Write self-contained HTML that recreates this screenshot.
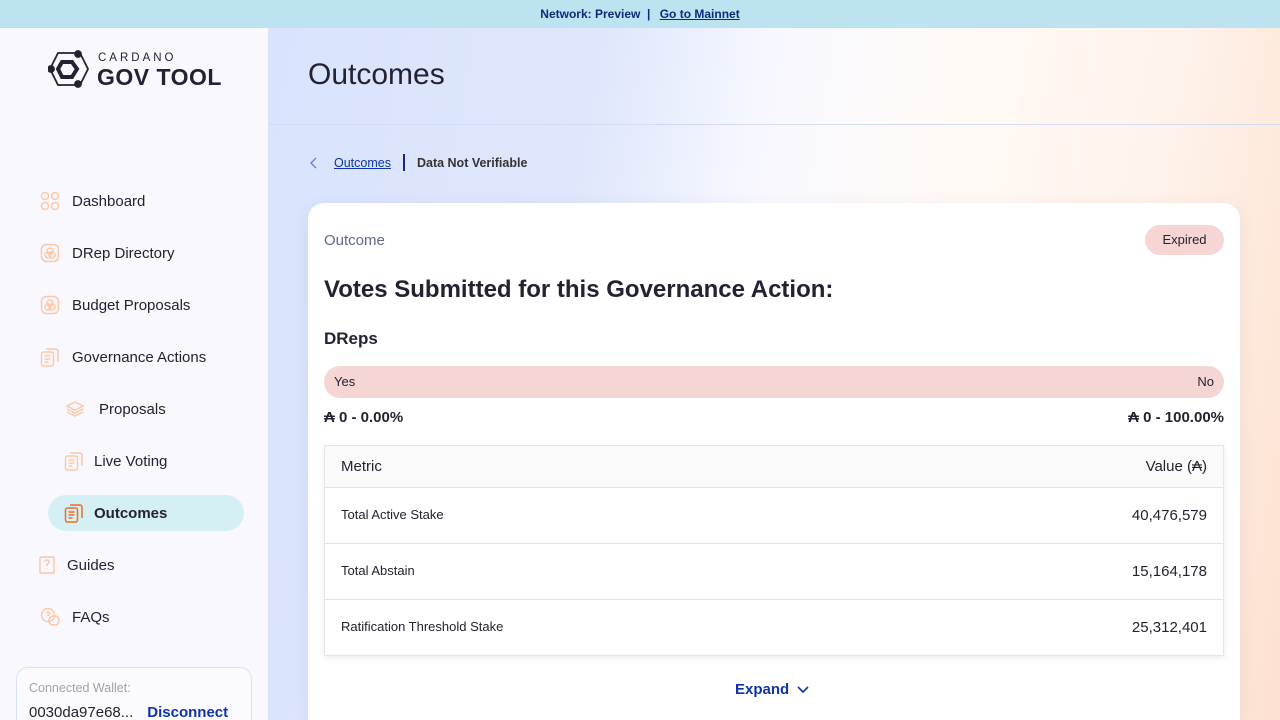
<!DOCTYPE html>
<html style="overflow:hidden;width:1280px;height:720px"><head><meta charset="utf-8"><style>
*{box-sizing:border-box;margin:0;padding:0}
body{width:1280px;height:720px;overflow:hidden;font-family:"Liberation Sans",sans-serif;color:#242232;position:relative;background:#fff}
.banner{position:absolute;top:0;left:0;width:1280px;height:28px;background:#bde3f0;text-align:center;font-size:12px;font-weight:bold;color:#0f2a7a;line-height:28px}
.banner a{color:#0f2a7a;text-decoration:underline;margin-left:6px}
.side{position:absolute;top:28px;left:0;width:268px;height:692px;background:#f9f8fe;overflow:hidden}
.main{position:absolute;top:28px;left:268px;width:1012px;height:692px;overflow:hidden;background:linear-gradient(100deg,#d9e3fd 0%,#dfe7fc 30%,#f7f8ff 45%,#fffaf7 60%,#fff3ec 80%,#fde1d0 100%)}
.logo{position:absolute;left:48px;top:22px}
.nav{position:absolute;left:40px;font-size:15px;display:flex;align-items:center;gap:12px;color:#242232}
.nav svg{width:20px;height:20px;fill:none;stroke:#fdc8a6;stroke-width:1.5}
.active{position:absolute;left:48px;top:467px;width:196px;height:36px;border-radius:18px;background:#d5f0f4}
.wallet{position:absolute;left:16px;top:639px;width:236px;height:53px;border:1px solid #d8e0f8;border-bottom:none;border-radius:12px 12px 0 0;background:#fbfbff;padding:13px 12px 0}
h1{position:absolute;left:40px;top:30px;font-size:30px;font-weight:normal;color:#242232}
.hr{position:absolute;left:0;top:96px;width:1012px;height:1px;background:#d3dcf5}
.crumb{position:absolute;left:40px;top:126px;font-size:12.5px;display:flex;align-items:center}
.card{position:absolute;left:40px;top:175px;width:932px;height:517px;background:#fff;border-radius:16px 16px 0 0;box-shadow:0 4px 20px rgba(0,0,0,.06)}
.tbl{position:absolute;left:16px;top:242px;width:900px;border:1px solid #e6e6e6;box-shadow:0 2px 6px rgba(0,0,0,.08)}
.row{height:56px;border-top:1px solid #e3e3e3;display:flex;justify-content:space-between;padding:0 16px;font-size:13px}
</style></head><body>
<div class="banner">Network: Preview &nbsp;| <a>Go to Mainnet</a></div>
<div class="side">
 <div class="logo">
  <svg width="42" height="38" viewBox="0 0 42 38" style="position:absolute;left:0;top:0" fill="none" stroke="#242232" stroke-width="1.8"><polygon points="10,3 32,3 40,19 32,35 10,35 2,19"/><polygon points="14,12 24,12 29,19 24,27 14,27 10,19" stroke-width="4"/><circle cx="30" cy="4" r="3" fill="#242232"/><circle cx="3" cy="19" r="3" fill="#242232"/><circle cx="30" cy="34" r="3" fill="#242232"/></svg>
  <div style="position:absolute;left:50px;top:2px;font-size:11.5px;letter-spacing:3px;white-space:nowrap">CARDANO</div>
  <div style="position:absolute;left:49px;top:14px;font-size:23px;font-weight:bold;white-space:nowrap;letter-spacing:.5px">GOV TOOL</div>
 </div>
 <div class="nav" style="top:163px"><svg viewBox="0 0 20 20"><circle cx="5" cy="5" r="3.5"/><circle cx="15" cy="5" r="3.5"/><circle cx="5" cy="15" r="3.5"/><circle cx="15" cy="15" r="3.5"/></svg><span>Dashboard</span></div>
 <div class="nav" style="top:215px"><svg viewBox="0 0 20 20"><rect x="1.5" y="1.5" width="17" height="17" rx="5"/><circle cx="10" cy="8" r="3"/><circle cx="8" cy="12" r="3"/><circle cx="12" cy="12" r="3"/></svg><span>DRep Directory</span></div>
 <div class="nav" style="top:267px"><svg viewBox="0 0 20 20"><rect x="1.5" y="1.5" width="17" height="17" rx="5"/><circle cx="10" cy="8" r="3"/><circle cx="8" cy="12" r="3"/><circle cx="12" cy="12" r="3"/></svg><span>Budget Proposals</span></div>
 <div class="nav" style="top:319px"><svg viewBox="0 0 20 20"><rect x="1.5" y="5" width="12" height="14" rx="2"/><path d="M6 2h10a2 2 0 0 1 2 2v11M4.5 9h6M4.5 12h6M4.5 15h4"/></svg><span>Governance Actions</span></div>
 <div class="nav" style="top:371px;left:65px;gap:14px"><svg viewBox="0 0 20 20"><path d="M10 3l8 4-8 4-8-4zM2 10l8 4 8-4M2 13l8 4 8-4"/></svg><span>Proposals</span></div>
 <div class="nav" style="top:423px;left:64px;gap:10px"><svg viewBox="0 0 20 20"><rect x="1.5" y="5" width="12" height="14" rx="2"/><path d="M6 2h10a2 2 0 0 1 2 2v11M4.5 9h6M4.5 12h6M4.5 15h4"/></svg><span>Live Voting</span></div>
 <div class="active"></div>
 <div class="nav" style="top:475px;left:64px;gap:10px"><svg viewBox="0 0 20 20" style="stroke:#f26b21"><rect x="1.5" y="5" width="12" height="14" rx="2"/><path d="M6 2h10a2 2 0 0 1 2 2v11M4.5 9h6M4.5 12h6M4.5 15h4"/></svg><span style="font-weight:bold">Outcomes</span></div>
 <div class="nav" style="top:527px;left:38px;gap:9px"><svg viewBox="0 0 20 20"><rect x="2" y="2" width="14" height="16" rx="1"/><path d="M7 7a2 2 0 1 1 2 2v2M9 13.5v.5"/></svg><span>Guides</span></div>
 <div class="nav" style="top:579px;left:40px"><svg viewBox="0 0 20 20"><circle cx="8" cy="8" r="6.5"/><rect x="9" y="9" width="10" height="9" rx="4"/><path d="M6.5 6.5a1.5 1.5 0 1 1 1.5 1.5v1"/></svg><span>FAQs</span></div>
 <div class="wallet"><div style="font-size:12.5px;color:#a3a3a3">Connected Wallet:</div>
 <div style="margin-top:9px;font-size:15px;display:flex;gap:14px;white-space:nowrap"><span>0030da97e68...</span><span style="color:#0f33a8;font-weight:bold">Disconnect</span></div></div>
</div>
<div class="main">
 <h1>Outcomes</h1>
 <div class="hr"></div>
 <div class="crumb"><svg width="12" height="14" viewBox="0 0 12 14" fill="none" stroke="#6b83cf" stroke-width="1.4"><path d="M8 2L3 7l5 5"/></svg><span style="color:#0f33a8;text-decoration:underline;margin-left:14px">Outcomes</span><span style="width:2px;height:17px;background:#1a238f;margin:0 12px"></span><span style="font-weight:bold;color:#333">Data Not Verifiable</span></div>
 <div class="card">
  <div style="position:absolute;left:16px;top:29px;font-size:15px;color:#5c6a8c">Outcome</div>
  <div style="position:absolute;right:16px;top:22px;width:79px;height:30px;border-radius:15px;background:#f6d6d4;font-size:13px;text-align:center;line-height:30px">Expired</div>
  <div style="position:absolute;left:16px;top:73px;font-size:24px;font-weight:bold">Votes Submitted for this Governance Action:</div>
  <div style="position:absolute;left:16px;top:126px;font-size:17px;font-weight:bold">DReps</div>
  <div style="position:absolute;left:16px;top:163px;width:900px;height:32px;border-radius:16px;background:#f5d6d4;font-size:13px;line-height:32px;padding:0 10px;display:flex;justify-content:space-between"><span>Yes</span><span>No</span></div>
  <div style="position:absolute;left:16px;top:206px;font-size:15px;font-weight:bold">₳ 0 - 0.00%</div>
  <div style="position:absolute;right:16px;top:206px;font-size:15px;font-weight:bold">₳ 0 - 100.00%</div>
  <div class="tbl">
   <div style="height:41px;background:#fafafa;display:flex;justify-content:space-between;padding:0 16px;align-items:center;font-size:15px"><span>Metric</span><span>Value (₳)</span></div>
   <div class="row"><span style="padding-top:19px">Total Active Stake</span><span style="padding-top:19px;font-size:15px">40,476,579</span></div>
   <div class="row"><span style="padding-top:19px">Total Abstain</span><span style="padding-top:19px;font-size:15px">15,164,178</span></div>
   <div class="row"><span style="padding-top:19px">Ratification Threshold Stake</span><span style="padding-top:19px;font-size:15px">25,312,401</span></div>
  </div>
  <div style="position:absolute;left:427px;top:478px;font-size:15px;font-weight:bold;color:#0f33a8;display:flex;align-items:center;gap:8px">Expand <svg width="12" height="8" viewBox="0 0 12 8" fill="none" stroke="#0f33a8" stroke-width="1.6"><path d="M1 1l5 5 5-5"/></svg></div>
 </div>
</div>
</body></html>
